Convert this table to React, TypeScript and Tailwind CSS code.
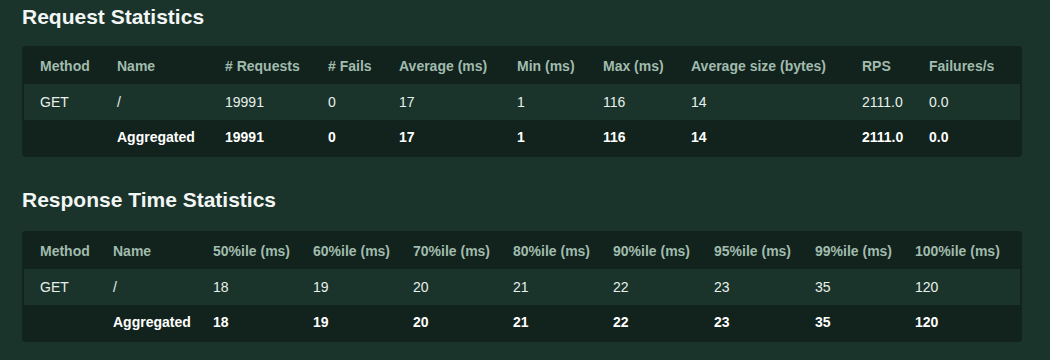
import React from 'react';

type Col = { label: string; w: string };

const requestCols: Col[] = [
  { label: 'Method', w: 'w-[77px]' },
  { label: 'Name', w: 'w-[108px]' },
  { label: '# Requests', w: 'w-[103px]' },
  { label: '# Fails', w: 'w-[71px]' },
  { label: 'Average (ms)', w: 'w-[118px]' },
  { label: 'Min (ms)', w: 'w-[86px]' },
  { label: 'Max (ms)', w: 'w-[88px]' },
  { label: 'Average size (bytes)', w: 'w-[171px]' },
  { label: 'RPS', w: 'w-[67px]' },
  { label: 'Failures/s', w: 'w-[107px]' },
];

const responseCols: Col[] = [
  { label: 'Method', w: 'w-[73px]' },
  { label: 'Name', w: 'w-[100px]' },
  { label: '50%ile (ms)', w: 'w-[100px]' },
  { label: '60%ile (ms)', w: 'w-[100px]' },
  { label: '70%ile (ms)', w: 'w-[100px]' },
  { label: '80%ile (ms)', w: 'w-[100px]' },
  { label: '90%ile (ms)', w: 'w-[101px]' },
  { label: '95%ile (ms)', w: 'w-[101px]' },
  { label: '99%ile (ms)', w: 'w-[100px]' },
  { label: '100%ile (ms)', w: 'w-[121px]' },
];

const requestRows = [
  ['GET', '/', '19991', '0', '17', '1', '116', '14', '2111.0', '0.0'],
  ['', 'Aggregated', '19991', '0', '17', '1', '116', '14', '2111.0', '0.0'],
];

const responseRows = [
  ['GET', '/', '18', '19', '20', '21', '22', '23', '35', '120'],
  ['', 'Aggregated', '18', '19', '20', '21', '22', '23', '35', '120'],
];

function StatsTable({ cols, rows }: { cols: Col[]; rows: string[][] }) {
  return (
    <div className="rounded-[4px] bg-[#12221c] p-[2px]">
      <table className="w-full table-fixed border-collapse text-[14px]">
        <thead>
          <tr className="h-[36px]">
            {cols.map((c) => (
              <th key={c.label} className={`${c.w} p-0 pl-4 text-left font-bold text-[#a0bcae]`}>
                {c.label}
              </th>
            ))}
          </tr>
        </thead>
        <tbody>
          {rows.map((r, i) => (
            <tr
              key={i}
              className={
                i === rows.length - 1
                  ? 'h-[35px] bg-[#12221c] font-bold text-white'
                  : 'h-[36px] bg-[#1b342b] text-[#e8f0ec]'
              }
            >
              {r.map((v, j) => (
                <td key={j} className="p-0 pl-4 text-left">
                  {v}
                </td>
              ))}
            </tr>
          ))}
        </tbody>
      </table>
    </div>
  );
}

export default function App() {
  return (
    <div
      className="min-h-[360px] w-[1050px] bg-[#1b342b] px-[22px] pt-[2px] text-white"
      style={{ fontFamily: '"Liberation Sans", Arial, sans-serif' }}
    >
      <h2 className="text-[21px] font-bold leading-[30px] text-[#f2f6f4]">Request Statistics</h2>
      <div className="mt-[14px] w-[1000px]">
        <StatsTable cols={requestCols} rows={requestRows} />
      </div>
      <h2 className="mt-[28px] text-[21px] font-bold leading-[30px] text-[#f2f6f4]">Response Time Statistics</h2>
      <div className="mt-[16px] w-[1000px]">
        <StatsTable cols={responseCols} rows={responseRows} />
      </div>
    </div>
  );
}
